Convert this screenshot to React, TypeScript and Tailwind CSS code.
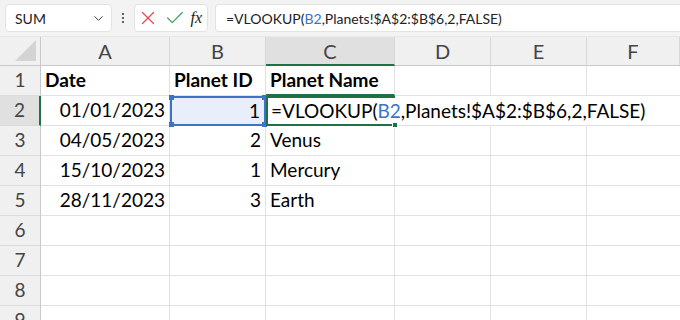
import { X, Check, ChevronDown } from "lucide-react";

const font = { fontFamily: "Lato, 'Open Sans', sans-serif" };

const cols = ["A", "B", "C", "D", "E", "F"];

type Row = { date: string; id: string; name: string };

const rows: Row[] = [
    { date: "Date", id: "Planet ID", name: "Planet Name" },
    { date: "01/01/2023", id: "1", name: "" },
    { date: "04/05/2023", id: "2", name: "Venus" },
    { date: "15/10/2023", id: "1", name: "Mercury" },
    { date: "28/11/2023", id: "3", name: "Earth" },
    { date: "", id: "", name: "" },
    { date: "", id: "", name: "" },
    { date: "", id: "", name: "" },
    { date: "", id: "", name: "" },
];

const Formula = () => (
    <span>
        =VLOOKUP(<span className="text-[#3b73c9]">B2</span>,Planets!$A$2:$B$6,2,FALSE)
    </span>
);

const Toolbar = () => (
    <div className="h-[37px] bg-[#f3f3f3] flex items-center pl-[5px] gap-[7px] text-[14px] text-[#222] border-b border-[#e8e8e8]">
        <div className="w-[107px] h-[28px] bg-white rounded-[4px] border border-[#e3e3e3] flex items-center justify-between pl-[9px] pr-[5px]">
            <span>SUM</span>
            <ChevronDown size={15} strokeWidth={1.6} className="text-[#444]" />
        </div>
        <div className="flex flex-col gap-[2px] w-[8px] items-center">
            <div className="w-[2px] h-[2px] bg-[#333] rounded-full" />
            <div className="w-[2px] h-[2px] bg-[#333] rounded-full" />
            <div className="w-[2px] h-[2px] bg-[#333] rounded-full" />
        </div>
        <div className="w-[74px] h-[28px] bg-white rounded-[4px] border border-[#e3e3e3] flex items-center justify-between pl-[2px] pr-[5px]">
            <X size={22} strokeWidth={1.3} className="text-[#e8474a]" />
            <Check size={22} strokeWidth={1.3} className="text-[#3e9f5a]" />
            <span
                className="italic text-[16px] text-[#222]"
                style={{ fontFamily: "'Liberation Serif', serif" }}
            >
                fx
            </span>
        </div>
        <div className="flex-1 h-[28px] bg-white rounded-l-[4px] border border-r-0 border-[#e3e3e3] flex items-center pl-[10px]">
            <Formula />
        </div>
    </div>
);

const App = () => {
    return (
        <div className="w-[680px] h-[320px] overflow-hidden bg-white" style={font}>
            <Toolbar />
            <div className="grid grid-cols-[41px_129px_96px_129px_96px_96px_1fr] grid-rows-[29px_repeat(9,30px)]">
                {/* corner */}
                <div className="bg-[#f0f0f0] border-r border-b border-[#c8c8c8] relative">
                    <div
                        className="absolute right-[4px] bottom-[4px] w-[21px] h-[21px] bg-[#d4d4d4]"
                        style={{ clipPath: "polygon(100% 0, 100% 100%, 0 100%)" }}
                    />
                </div>
                {cols.map((c) => (
                    <div
                        key={c}
                        className={`flex items-center justify-center text-[20px] text-[#444] border-r border-[#d8d8d8] ${
                            c === "C"
                                ? "bg-[#e0e0e0] border-b-2 border-b-[#1e7145]"
                                : "bg-[#f0f0f0] border-b border-b-[#c8c8c8]"
                        }`}
                    >
                        {c}
                    </div>
                ))}

                {rows.map((r, i) => {
                    const n = i + 1;
                    const sel = n === 2;
                    const bold = n === 1 ? "font-bold" : "";
                    return (
                        <div key={n} className="contents">
                            <div
                                className={`flex items-center justify-center text-[19px] text-[#444] border-b border-[#dadada] ${
                                    sel
                                        ? "bg-[#e0e0e0] border-r-2 border-r-[#1e7145]"
                                        : "bg-[#f0f0f0] border-r border-r-[#c8c8c8]"
                                }`}
                            >
                                {n}
                            </div>
                            <div
                                className={`flex items-center justify-end pr-[4px] text-[19px] text-black border-r border-b border-[#e1e1e1] ${bold} ${
                                    n === 1 ? "justify-start pl-[4px]" : ""
                                }`}
                            >
                                {r.date}
                            </div>
                            {sel ? (
                                <div className="relative flex items-center justify-end pr-[4px] text-[19px] text-black bg-[#e8eefa] border-2 border-[#3b73c9]">
                                    1
                                    <div className="absolute -left-[3px] -top-[3px] w-[5px] h-[5px] bg-[#3b73c9]" />
                                    <div className="absolute -right-[3px] -top-[3px] w-[5px] h-[5px] bg-[#3b73c9]" />
                                    <div className="absolute -left-[3px] -bottom-[3px] w-[5px] h-[5px] bg-[#3b73c9]" />
                                    <div className="absolute -right-[3px] -bottom-[3px] w-[5px] h-[5px] bg-[#3b73c9]" />
                                </div>
                            ) : (
                                <div
                                    className={`flex items-center pr-[4px] pl-[4px] text-[19px] text-black border-r border-b border-[#e1e1e1] ${bold} ${
                                        n === 1 ? "justify-start" : "justify-end"
                                    }`}
                                >
                                    {r.id}
                                </div>
                            )}
                            {sel ? (
                                <div className="relative flex items-center pl-[3px] text-[19px] text-black whitespace-nowrap border-y-2 border-l-2 border-[#1e7145] z-10">
                                    <Formula />
                                    <div className="absolute right-0 -bottom-[2px] w-full h-[2px] bg-[#1e7145]" />
                                    <div className="absolute -right-[3px] -bottom-[4px] w-[6px] h-[6px] bg-[#1e7145] border border-white" />
                                </div>
                            ) : (
                                <div
                                    className={`flex items-center pl-[4px] text-[19px] text-black border-r border-b border-[#e1e1e1] ${bold} ${
                                        n === 1 ? "border-b-2 border-b-[#1e7145]" : ""
                                    }`}
                                >
                                    {r.name}
                                </div>
                            )}
                            <div className={`border-r border-b border-[#e1e1e1] ${sel ? "border-r-transparent" : ""}`} />
                            <div className={`border-r border-b border-[#e1e1e1] ${sel ? "border-r-transparent" : ""}`} />
                            <div className="border-b border-[#e1e1e1]" />
                        </div>
                    );
                })}
            </div>
        </div>
    );
};

export default App;
